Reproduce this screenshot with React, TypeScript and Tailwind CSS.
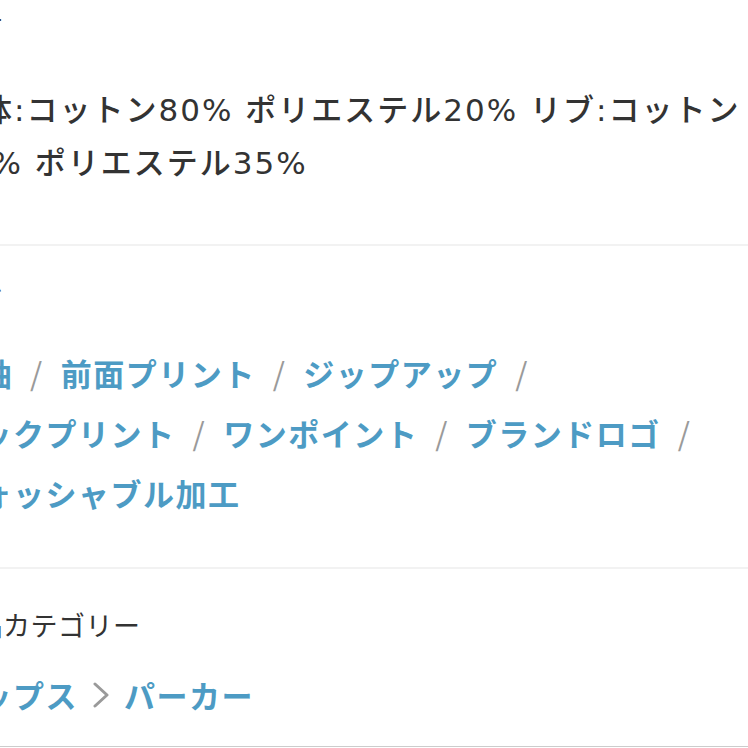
import React from "react";

const tags = [
  "長袖",
  "前面プリント",
  "ジップアップ",
  "バックプリント",
  "ワンポイント",
  "ブランドロゴ",
  "ウォッシャブル加工",
];

export default function App() {
  return (
    <div
      className="w-[748px] h-[748px] overflow-hidden bg-white text-[#333333]"
      style={{ fontFamily: '"Noto Sans CJK JP", "Noto Sans", sans-serif' }}
    >
      <div className="-ml-[52px] w-[800px] flex flex-col">
        {/* Section 1: material */}
        <section className="pt-[7px] pb-[54px]">
          <div className="text-[27px] leading-[36px] text-[#333333]">素材</div>
          <p
            className="mt-[41px] text-[31px] leading-[53px] tracking-[2px] font-medium text-[#333333]"
            style={{ fontFamily: '"DejaVu Sans", "Noto Sans CJK JP", sans-serif' }}
          >
            本体:コットン80% ポリエステル20% リブ:コットン
            <br />
            65% ポリエステル35%
          </p>
        </section>
        <div className="h-[2px] bg-[#f2f2f2]" />

        {/* Section 2: tags */}
        <section className="pt-[36px] pb-[44px]">
          <div className="text-[27px] leading-[36px] text-[#333333]">タグ</div>
          <div className="mt-[25px] flex flex-wrap text-[31px] leading-[60px] tracking-[1.5px] font-bold">
            {tags.map((t, i) => (
              <span key={t} className="whitespace-nowrap flex items-center">
                <span className="text-[#4d9bc4]">{t}</span>
                {i < tags.length - 1 && (
                  <span className="mx-[17px] font-normal text-[#9a9a9a]">/</span>
                )}
              </span>
            ))}
          </div>
        </section>
        <div className="h-[2px] bg-[#f2f2f2]" />

        {/* Section 3: category */}
        <section className="pt-[38px] pb-[25px] border-b border-[#cccccc]">
          <div className="text-[27px] leading-[36px] tracking-[0.5px] text-[#333333]">商品カテゴリー</div>
          <div className="mt-[25px] flex items-center text-[31px] leading-[53px] tracking-[1.5px] font-bold text-[#4d9bc4]">
            <span>トップス</span>
            <svg
              className="mx-[15px]"
              width="16"
              height="26"
              viewBox="0 0 16 26"
              fill="none"
              stroke="#9a9a9a"
              strokeWidth="3"
              strokeLinecap="round"
              strokeLinejoin="round"
            >
              <polyline points="2,2 14,13 2,24" />
            </svg>
            <span>パーカー</span>
          </div>
        </section>
      </div>
    </div>
  );
}
